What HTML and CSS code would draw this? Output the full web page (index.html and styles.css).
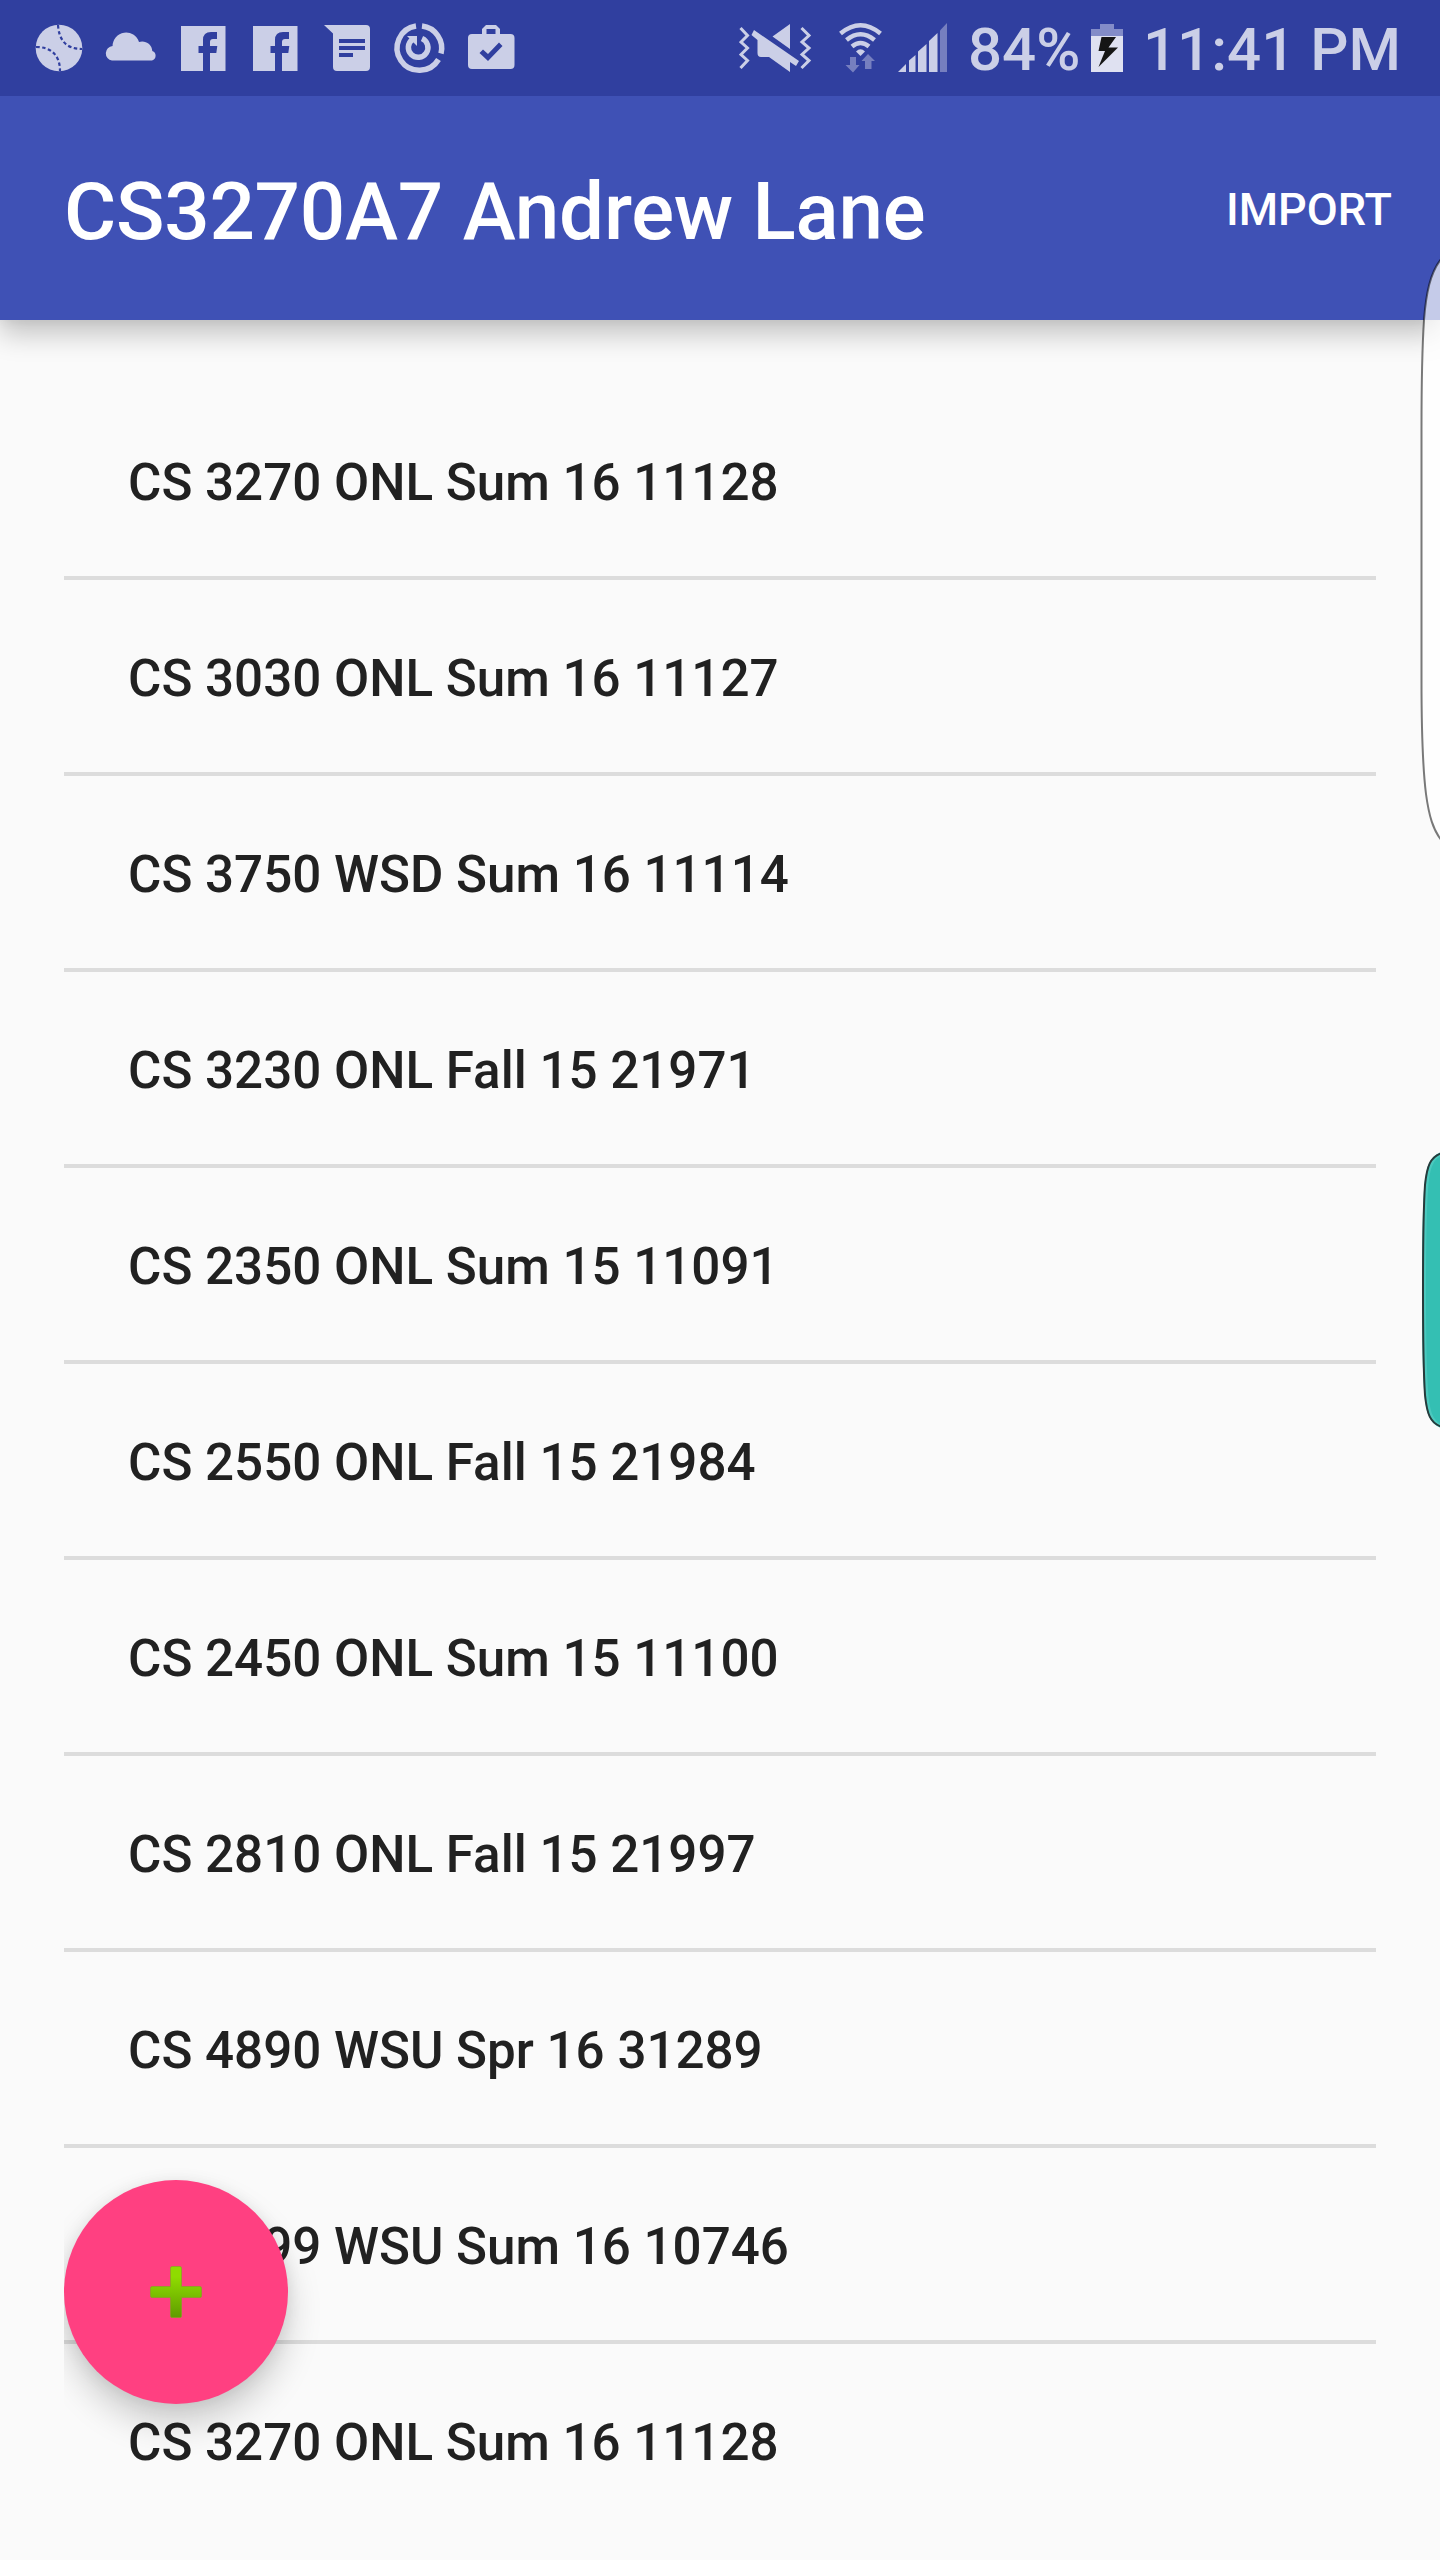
FILE: index.html
```html
<!DOCTYPE html>
<html lang="en">
<head>
<meta charset="utf-8">
<title>CS3270A7 Andrew Lane</title>
<link rel="stylesheet" href="styles.css">
</head>
<body>
<div class="screen">
  <div class="status">
    <div class="notifications">
      <svg class="slot" viewBox="23 0 72 96"><circle cx="59" cy="48" r="23.3" fill="currentColor"/><g class="seam"><path d="M58 25C59 40 66 49 82 49"/><path d="M36 47C51 47 60 55 60 71"/></g></svg>
      <svg class="slot" viewBox="95 0 72 96"><path fill="currentColor" d="M112 60.500A7.300 7.300 0 0 1 112.600 46A13.500 13.500 0 0 1 139 42C145 40 152 44 152.300 51A5 5 0 0 1 152 60.500Z"/></svg>
      <svg class="slot" viewBox="167 0 72 96"><path fill="currentColor" d="M181 26H225.500V71H210V53H216.300L217.300 46H210V42Q210 39 213 39H217V32H211Q203 32 203 40V46H198.500V53H203V71H181Z"/></svg>
      <svg class="slot" viewBox="167 0 72 96"><path fill="currentColor" d="M181 26H225.500V71H210V53H216.300L217.300 46H210V42Q210 39 213 39H217V32H211Q203 32 203 40V46H198.500V53H203V71H181Z"/></svg>
      <svg class="slot" viewBox="311 0 72 96"><path fill="currentColor" fill-rule="evenodd" d="M324 25H366Q370 25 370 29V67Q370 71 366 71H337Q333 71 333 67V33.500ZM339 39V43H365V39ZM339 46V50H365V46ZM339 53V57H353V53Z"/></svg>
      <svg class="slot" viewBox="383 0 72 96"><g fill="none" stroke="currentColor" stroke-width="5.500"><path d="M416 26A22.300 22.300 0 1 0 438.500 59.500"/><path d="M422 26A22.300 22.300 0 0 1 441 53.500"/><path d="M412.500 39.500A9.800 9.800 0 1 0 422 38.500"/></g><path fill="currentColor" d="M407 36H417V46Z"/></svg>
      <svg class="slot" viewBox="455 0 72 96"><path fill="currentColor" fill-rule="evenodd" d="M482 34V29L486 25H496L500 29V34H510.500Q514.500 34 514.500 38V65Q514.500 69 510.500 69H472Q468 69 468 65V38Q468 34 472 34ZM486.500 29V34H495.500V29ZM479.500 53L488 61L502.500 46L499 42.500L488 54L483 49.500Z"/></svg>
    </div>
    <div class="system">
      <svg class="mute" viewBox="739 0 74 96"><g fill="none" stroke="currentColor" stroke-width="3"><path d="M740.500 28L747.500 35.500L741 42L747.500 48L741 54.500L747.500 60.500L740.500 68"/><path d="M801.500 28L809 35.500L802 42L809 48L802 54.500L809 60.500L801.500 68"/></g><path fill="currentColor" d="M790 24V49L772.500 36.500ZM754 30L799 61L796 66L790 62V72L769 57H761Q757.500 57 757.500 53V40L751.500 35Z"/></svg>
      <svg class="wifi" viewBox="839 0 44 96"><g fill="none" stroke="currentColor" stroke-width="4.500"><path d="M840.500 33.500Q860.500 17 880.500 33.500"/><path d="M846.500 40Q860.500 28.500 874.500 40"/><path d="M852 46.500Q860.500 39.500 869 46.500"/></g><path fill="currentColor" d="M856 51.500Q860.500 47 865 51.500L860.500 56Z"/><path fill="currentColor" opacity=".45" d="M850 57H856V65H859.500L853 72.500L845.500 65H850ZM865 69V61H861.500L868 54L875 61H871.500V69Z"/></svg>
      <svg class="signal" viewBox="898 0 50 96"><path fill="currentColor" d="M898 72L906 64V72ZM909 60.500L915.500 55V72H909ZM918 51.500L926.500 44V72H918ZM929 41L937.500 33V72H929Z"/><path fill="currentColor" opacity=".45" d="M940 30.500L947 23V72H940Z"/></svg>
      <span class="percent">84%</span>
      <svg class="battery" viewBox="1091 0 32 96"><path fill="#838cc8" d="M1091 29H1100V24H1114V29H1123V36H1091Z"/><path fill="#dfe1f1" d="M1091 36H1123V72H1091Z"/><path fill="#151515" d="M1101.500 37H1116L1108.500 47.500H1118L1098.500 67L1105 51H1098.500Z"/></svg>
      <span class="clock">11:41 PM</span>
    </div>
  </div>
  <header class="appbar">
    <h1>CS3270A7 Andrew Lane</h1>
    <button class="import">IMPORT</button>
  </header>
  <ul class="courses">
    <li>CS 3270 ONL Sum 16 11128</li>
    <li>CS 3030 ONL Sum 16 11127</li>
    <li>CS 3750 WSD Sum 16 11114</li>
    <li>CS 3230 ONL Fall 15 21971</li>
    <li>CS 2350 ONL Sum 15 11091</li>
    <li>CS 2550 ONL Fall 15 21984</li>
    <li>CS 2450 ONL Sum 15 11100</li>
    <li>CS 2810 ONL Fall 15 21997</li>
    <li>CS 4890 WSU Spr 16 31289</li>
    <li>CS 4899 WSU Sum 16 10746</li>
    <li>CS 3270 ONL Sum 16 11128</li>
  </ul>
  <div class="fab-layer">
    <button class="fab" aria-label="Add">
      <svg class="plus" viewBox="0 0 56 56"><defs><linearGradient id="leaf" x1="0" y1="0" x2="0" y2="1"><stop offset="0.200" stop-color="#8fdc00"/><stop offset="1" stop-color="#5f9c00"/></linearGradient></defs><path fill="url(#leaf)" stroke="#7aa91c" stroke-opacity=".6" d="M24 2.500H32Q33.500 2.500 33.500 4V22.500H52Q53.500 22.500 53.500 24V32Q53.500 33.500 52 33.500H33.500V52Q33.500 53.500 32 53.500H24Q22.500 53.500 22.500 52V33.500H4Q2.500 33.500 2.500 32V24Q2.500 22.500 4 22.500H22.500V4Q22.500 2.500 24 2.500Z"/></svg>
    </button>
  </div>
  <svg class="edge edge-top" viewBox="1416 250 24 600"><path fill="#fff" fill-opacity=".7" stroke="#000" stroke-opacity=".52" stroke-width="2" d="M1442 258C1430 272 1426 294 1424 320C1422 350 1421.500 380 1421.500 430V680C1421.500 740 1423 770 1426 794C1429 816 1433 830 1442 841"/></svg>
  <svg class="edge edge-mid" viewBox="1416 1140 24 300"><path fill="#34bfb3" stroke="#4bc9be" stroke-width="4" d="M1442 1154C1430 1157 1427 1172 1426 1190C1424 1220 1424 1240 1424 1290C1424 1340 1424 1360 1426 1390C1427 1408 1430 1423 1442 1426"/><path fill="none" stroke="#273a3b" stroke-width="2" d="M1442 1153C1430 1157 1427 1166 1425 1185C1423 1215 1423 1240 1423 1290C1423 1340 1423 1365 1425 1395C1427 1414 1430 1423 1442 1427"/></svg>
</div>
</body>
</html>
```
FILE: styles.css
```css
* { box-sizing: border-box; }

body {
  margin: 0;
  font-family: Roboto, "Liberation Sans", sans-serif;
  font-weight: 500;
  background: #fafafa;
}

.screen {
  position: relative;
  display: flex;
  flex-direction: column;
  width: 1440px;
  height: 2560px;
  overflow: hidden;
}

.status {
  display: flex;
  justify-content: space-between;
  height: 96px;
  padding: 0 40px 0 23px;
  background: #303f9f;
  color: #cbcfe7;
  position: relative;
  z-index: 1;
}

.notifications, .system { display: flex; align-items: center; }
.slot { width: 72px; height: 96px; }
.seam { fill: none; stroke: #303f9f; stroke-width: 2.200; stroke-dasharray: 3.500 2.500; }
.mute { width: 74px; height: 96px; margin-right: 26px; }
.wifi { width: 44px; height: 96px; margin-right: 15px; }
.signal { width: 50px; height: 96px; margin-right: 20px; }
.battery { width: 32px; height: 96px; margin-right: 20px; }
.percent, .clock { padding-top: 4px; font-size: 60px; line-height: 96px; white-space: nowrap; }
.percent { width: 123px; }
.clock { width: 257px; }

.appbar {
  display: flex;
  align-items: center;
  justify-content: space-between;
  height: 224px;
  padding: 4px 48px 0 64px;
  background: #3f51b5;
  color: #fff;
  position: relative;
  box-shadow: 0 14px 26px rgba(0, 0, 0, .22), 0 2px 10px rgba(0, 0, 0, .05);
}

h1 { margin: 0; padding-top: 4px; font-size: 80px; font-weight: 500; line-height: 96px; letter-spacing: -.25px; }

button { border: 0; font: inherit; color: inherit; }
.import { padding: 0; background: none; font-size: 45px; line-height: 56px; }

.courses {
  list-style: none;
  margin: 64px 64px 0;
  padding: 0;
  height: 2112px;
  overflow: hidden;
}

.courses li {
  height: 196px;
  padding: 3px 0 0 64px;
  border-bottom: 4px solid #dcdcdc;
  color: #212121;
  font-size: 51.130px;
  line-height: 191px;
}

.fab-layer {
  position: absolute;
  left: 64px;
  top: 2120px;
  width: 340px;
  height: 376px;
  padding-top: 60px;
  overflow: hidden;
}

.fab {
  display: flex;
  align-items: center;
  justify-content: center;
  width: 224px;
  height: 224px;
  padding: 0;
  border-radius: 50%;
  background: #ff4081;
  box-shadow: 0 20px 34px rgba(0, 0, 0, .18), 0 2px 16px rgba(0, 0, 0, .08);
}

.plus { width: 56px; height: 56px; }

.edge { position: absolute; right: 0; width: 24px; }
.edge-top { top: 250px; height: 600px; }
.edge-mid { top: 1140px; height: 300px; }
```
